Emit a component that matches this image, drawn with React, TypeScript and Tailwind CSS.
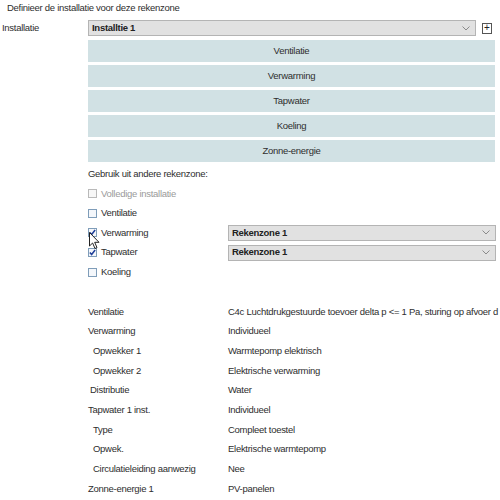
import React from 'react';

const buttons = ['Ventilatie', 'Verwarming', 'Tapwater', 'Koeling', 'Zonne-energie'];

const checks = [
  { label: 'Volledige installatie', checked: false, disabled: true },
  { label: 'Ventilatie', checked: false },
  { label: 'Verwarming', checked: true, zone: 'Rekenzone 1' },
  { label: 'Tapwater', checked: true, zone: 'Rekenzone 1' },
  { label: 'Koeling', checked: false },
];

const summary: { label: string; value: string; indent?: string }[] = [
  { label: 'Ventilatie', value: 'C4c Luchtdrukgestuurde toevoer delta p <= 1 Pa, sturing op afvoer d' },
  { label: 'Verwarming', value: 'Individueel' },
  { label: 'Opwekker 1', value: 'Warmtepomp elektrisch', indent: 'pl-[5px]' },
  { label: 'Opwekker 2', value: 'Elektrische verwarming', indent: 'pl-[5px]' },
  { label: 'Distributie', value: 'Water', indent: 'pl-[2px]' },
  { label: 'Tapwater 1 inst.', value: 'Individueel' },
  { label: 'Type', value: 'Compleet toestel', indent: 'pl-[5px]' },
  { label: 'Opwek.', value: 'Elektrische warmtepomp', indent: 'pl-[5px]' },
  { label: 'Circulatieleiding aanwezig', value: 'Nee', indent: 'pl-[5px]' },
  { label: 'Zonne-energie 1', value: 'PV-panelen' },
];

const Chevron = () => (
  <svg width="8" height="5" viewBox="0 0 8 5" className="shrink-0">
    <path d="M0.5 0.5 L4 4 L7.5 0.5" fill="none" stroke="#8a8a8a" strokeWidth="1" />
  </svg>
);

const Select = ({ value, className }: { value: string; className: string }) => (
  <div
    className={`h-[16px] flex items-center justify-between pl-[3px] pr-[5px] bg-[#e1e1e1] border border-[#b4b4b4] font-bold text-[#222] ${className}`}
  >
    <span>{value}</span>
    <Chevron />
  </div>
);

const Checkbox = ({ checked, disabled }: { checked: boolean; disabled?: boolean }) => (
  <span
    className={`w-[9px] h-[9px] border flex items-center justify-center shrink-0 ${
      disabled ? 'border-[#b9b9b9] bg-[#f7f7f7]' : 'border-[#7f9db9] bg-[#f4f7fb]'
    }`}
  >
    {checked && (
      <svg width="7" height="7" viewBox="0 0 8 8">
        <path d="M1 4 L3 6.2 L7 1.2" fill="none" stroke="#21409a" strokeWidth="1.8" />
      </svg>
    )}
  </span>
);

export default function App() {
  return (
    <div
      className="relative w-[500px] h-[500px] overflow-hidden bg-white text-[9.5px] tracking-[-0.28px] text-[#2e2e2e]"
      style={{ fontFamily: '"Liberation Sans", Arial, sans-serif' }}
    >
      {/* heading */}
      <div className="h-[16px] leading-[16px] pl-[7px]">Definieer de installatie voor deze rekenzone</div>

      {/* installatie select */}
      <div className="flex items-center mt-[4px] h-[16px]">
        <div className="w-[88px] pl-[2px]">Installatie</div>
        <Select value="Installtie 1" className="w-[388px]" />
        <span className="ml-[6px] w-[10px] h-[11px] border border-[#555] flex items-center justify-center text-[10px] leading-none tracking-normal text-[#222]">
          +
        </span>
      </div>

      {/* section buttons */}
      <div className="ml-[88px] w-[407px] mt-[4px] flex flex-col gap-[3px]">
        {buttons.map((b) => (
          <div key={b} className="h-[22px] bg-[#d1e1e4] flex items-center justify-center">
            {b}
          </div>
        ))}
      </div>

      {/* other zone */}
      <div className="ml-[88px] mt-[2px] h-[20px] flex items-center">Gebruik uit andere rekenzone:</div>
      <div className="ml-[88px]">
        {checks.map((c) => (
          <div key={c.label} className="h-[19.6px] flex items-center">
            <div className={`w-[140px] flex items-center gap-[4px] ${c.disabled ? 'text-[#9a9a9a]' : ''}`}>
              <Checkbox checked={c.checked} disabled={c.disabled} />
              <span>{c.label}</span>
            </div>
            {c.zone && <Select value={c.zone} className="w-[268px]" />}
          </div>
        ))}
      </div>

      {/* summary */}
      <div className="ml-[88px] mt-[20px]">
        {summary.map((r) => (
          <div key={r.label} className="h-[19.67px] flex items-center whitespace-nowrap">
            <div className={`w-[140px] shrink-0 ${r.indent ?? ''}`}>{r.label}</div>
            <div>{r.value}</div>
          </div>
        ))}
      </div>

      {/* mouse cursor */}
      <svg className="absolute left-[89px] top-[232px]" width="12" height="18" viewBox="0 0 12 18">
        <path
          d="M0.5 0.5 L0.5 14 L3.6 11 L6 16.5 L8 15.6 L5.7 10.3 L10 10.3 Z"
          fill="#fff"
          stroke="#222"
          strokeWidth="1"
          strokeLinejoin="round"
        />
      </svg>
    </div>
  );
}
